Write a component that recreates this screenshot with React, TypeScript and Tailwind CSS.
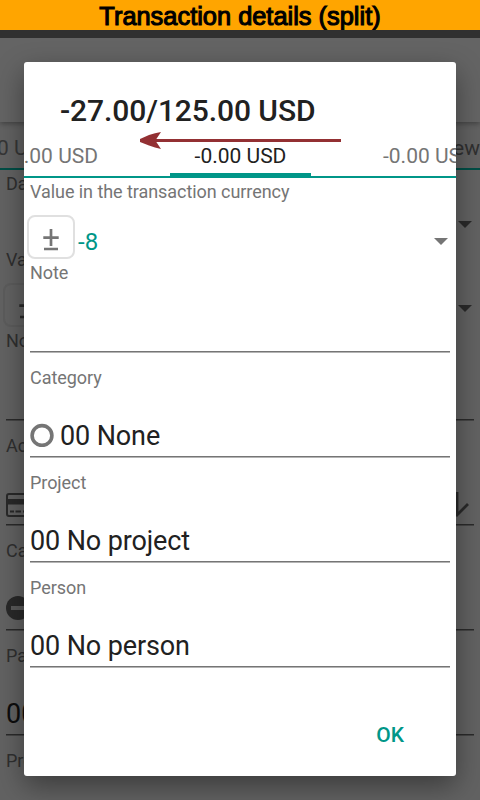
import type { ReactNode } from 'react';

const FONT = "font-['Roboto','Noto_Sans',sans-serif]";

function Caret({ className }: { className: string }) {
  return (
    <svg className={className} width="14" height="7" viewBox="0 0 14 7">
      <path d="M0 0h14L7 7z" fill="currentColor" />
    </svg>
  );
}

function PlusMinus() {
  return (
    <svg width="16" height="22" viewBox="0 0 16 22" fill="none" stroke="currentColor" strokeWidth="2.700">
      <path d="M8 0v17M0.300 8.700h15.400M1 20h14" />
    </svg>
  );
}

function Field({ label, children }: { label: string; children?: ReactNode }) {
  return (
    <div className="h-[105px]">
      <div className="h-[21px] text-[18px] leading-[21px] tracking-[-0.06px] text-[#757575]">{label}</div>
      <div className="flex h-[68px] items-end pb-[4px] text-[27px] leading-8 tracking-[-0.12px] text-[#212121]">{children}</div>
      <div className="h-[2px] border-t border-[#757575] bg-[#b4b4b4]" />
    </div>
  );
}

function PageField({ label, children }: { label: string; children?: ReactNode }) {
  return (
    <div className="h-[105px]">
      <div className="h-[21px] text-[18px] leading-[21px] text-[#2f2f2f]">{label}</div>
      <div className="flex h-[68px] items-end pb-[4px] text-[27px] leading-8 text-[#0d0d0d]">{children}</div>
      <div className="h-[2px] border-t border-[#2a2a2a] bg-[#454545]" />
    </div>
  );
}

function Page() {
  return (
    <div className="flex h-[762px] flex-col overflow-hidden bg-[#626262]">
      <div className="relative h-[84px] shrink-0 bg-[#646464] shadow-[0_2px_5px_rgba(0,0,0,0.3)]" />
      <div className="flex h-[48px] shrink-0 justify-between overflow-hidden border-b-2 border-[#004e46] pt-[14px] text-[21px] leading-[25px] whitespace-nowrap">
        <span className="-ml-[3px] text-[#363636]">0 USD</span>
        <span className="text-[#303030]">View</span>
      </div>
      <div className="px-[6px] pt-[3px]">
        <div className="flex h-[76px] justify-between text-[18px] leading-[21px] text-[#2f2f2f]">
          <span>Date</span>
          <Caret className="mt-[48px] mr-[2px] text-[#2a2a2a]" />
        </div>
        <div className="flex h-[81px] justify-between text-[18px] leading-[21px] text-[#2f2f2f]">
          <div>
            <div>Value</div>
            <div className="-ml-[3px] mt-[13px] flex h-[44px] w-[48px] items-center justify-center rounded-lg border-2 border-[#5c5c5c] pt-[5px] text-[#2a2a2a]">
              <PlusMinus />
            </div>
          </div>
          <Caret className="mt-[56px] mr-[2px] text-[#2a2a2a]" />
        </div>
        <PageField label="Note" />
        <PageField label="Account">
          <div className="flex w-full items-center justify-between">
            <svg className="mb-[2px] text-[#292929]" width="30" height="24" viewBox="0 0 30 24" fill="none">
              <rect x="1" y="1" width="28" height="22" rx="2" stroke="currentColor" strokeWidth="2" />
              <path d="M1 6h28v5.5H1z" fill="currentColor" />
              <path d="M4 18.5h4M9.500 18.5h5.500M17 18.5h4" stroke="currentColor" strokeWidth="2" />
            </svg>
            <svg className="mr-[4px] mb-[3px] text-[#2a2a2a]" width="26" height="26" viewBox="0 0 26 26" fill="none" stroke="currentColor" strokeWidth="2.800">
              <path d="M13 1v22M2 13l11 11L24 13" />
            </svg>
          </div>
        </PageField>
        <PageField label="Category">
          <svg className="mb-[5px]" width="24" height="24" viewBox="0 0 24 24">
            <circle cx="12" cy="12" r="12" fill="#292929" />
            <path d="M5 10h14v4H5z" fill="#5a5a5a" />
          </svg>
        </PageField>
        <PageField label="Payee">00 No payee</PageField>
        <PageField label="Project" />
      </div>
    </div>
  );
}

function SplitDialog() {
  return (
    <div className="absolute top-[62px] left-[24px] h-[714px] w-[432px] overflow-hidden rounded-[3px] bg-white">
      <div className="h-[81px] pt-[31px] pl-[36px] text-[30px] leading-[35px] font-medium tracking-[-0.08px] text-[#212121]">
        -27.00/125.00 USD
      </div>
      <div className="flex h-[35px] border-b-2 border-[#009688] text-[21px] leading-[27px] whitespace-nowrap text-[#757575]">
        <div className="flex w-[146px] justify-end pr-[72px]">
          <span>-0.00 USD</span>
        </div>
        <div className="h-[33px] w-[141px] border-b-[3px] border-[#009688] text-center text-[#212121]">-0.00 USD</div>
        <div className="w-[145px] pl-[72px]">-0.00 USD</div>
      </div>
      <div className="px-[6px] pt-[3px]">
        <div className="h-[81px]">
          <div className="h-[21px] text-[18px] leading-[21px] tracking-[-0.06px] text-[#757575]">Value in the transaction currency</div>
          <div className="mt-[13px] -ml-[3px] flex h-[44px] items-center">
            <div className="flex h-[44px] w-[48px] shrink-0 items-center justify-center rounded-lg border-2 border-[#e0e0e0] pt-[5px] text-[#757575]">
              <PlusMinus />
            </div>
            <span className="ml-[3px] grow pt-[9px] text-[24px] leading-7 text-[#009688]">-8</span>
            <Caret className="mt-[8px] mr-[2px] text-[#757575]" />
          </div>
        </div>
        <Field label="Note" />
        <Field label="Category">
          <svg className="mr-[6px] mb-[5px]" width="24" height="24" viewBox="0 0 24 24">
            <circle cx="12" cy="12.500" r="9.900" fill="none" stroke="#757575" strokeWidth="3.600" />
          </svg>
          00 None
        </Field>
        <Field label="Project">00 No project</Field>
        <Field label="Person">00 No person</Field>
      </div>
      <div className="flex justify-end pt-[41px] pr-[52px] text-[21px] leading-[25px] font-medium text-[#009688]">OK</div>
    </div>
  );
}

export default function App() {
  return (
    <div className={`relative h-[800px] w-[480px] overflow-hidden ${FONT}`}>
      <div className="h-[30px] overflow-hidden bg-[#ffa500] pt-px text-center font-['Liberation_Sans',Arial,sans-serif] text-[25.4px] leading-[30px] text-black [-webkit-text-stroke:1.1px_black]">
        Transaction details (split)
      </div>
      <div className="h-[8px] bg-[#303030]" />
      <Page />
      <div className="absolute top-[38px] bottom-0 w-[480px] overflow-hidden">
        <div className="ml-[24px] mt-[24px] h-[714px] w-[432px] rounded-[3px] shadow-[0_10px_28px_rgba(0,0,0,0.4)]" />
      </div>
      <SplitDialog />
      <svg className="absolute top-[131px] left-[140px]" width="202" height="19" viewBox="0 0 202 19">
        <path d="M15 9.500H201" stroke="#933033" strokeWidth="3" />
        <path d="M0 8L9 4Q15 2 21 1L16 8.500V10.500L21 18Q15 16.500 9 14.500L0 11Z" fill="#933033" />
      </svg>
    </div>
  );
}
